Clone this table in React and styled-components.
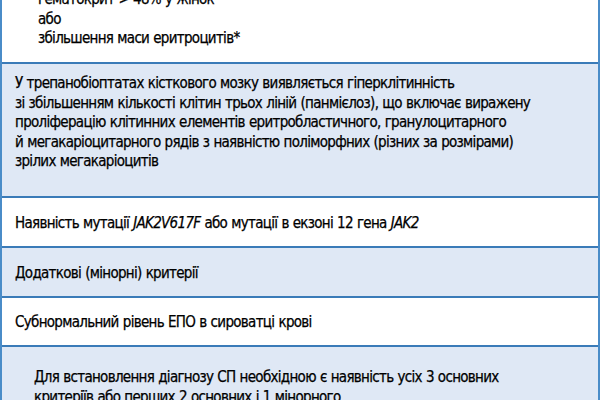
import React from 'react'
import styled, { createGlobalStyle } from 'styled-components'

const Global = createGlobalStyle`
  html, body { margin: 0; padding: 0; background: #fff; overflow: hidden; }
  body { font-family: "DejaVu Sans Condensed", "Noto Sans", sans-serif; }
`

const Table = styled.div`
  width: 600px;
  margin-top: -10px;
  box-sizing: border-box;
  border-left: 2px solid #4a8cc8;
  border-right: 2px solid #4a8cc8;
`

const Row = styled.div`
  box-sizing: border-box;
  height: ${p => p.h}px;
  padding: ${p => p.pad || '3px 0 0 13px'};
  background: ${p => (p.blue ? '#dfe8f5' : '#ffffff')};
  border-top: ${p => (p.first ? 'none' : '2px solid #3a7bb8')};
  display: flex;
  flex-direction: column;
  justify-content: ${p => p.align || 'center'};
`

const Line = styled.div`
  font-size: 15px;
  line-height: 19.5px;
  letter-spacing: -0.7px;
  word-spacing: 0.5px;
  color: #000;
  -webkit-text-stroke: 0.25px #000;
  white-space: nowrap;
`

const Gene = styled.i`
  font-style: italic;
`

export default function App() {
  return (
    <>
      <Global />
      <Table>
        <Row first h={72} pad="0 0 0 36px" align="flex-start">
          <Line>гематокрит &gt; 48% у жінок</Line>
          <Line>або</Line>
          <Line>збільшення маси еритроцитів*</Line>
        </Row>
        <Row blue h={134} pad="10px 0 0 13px" align="flex-start">
          <Line>У трепанобіоптатах кісткового мозку виявляється гіперклітинність</Line>
          <Line>зі збільшенням кількості клітин трьох ліній (панмієлоз), що включає виражену</Line>
          <Line>проліферацію клітинних елементів еритробластичного, гранулоцитарного</Line>
          <Line>й мегакаріоцитарного рядів з наявністю поліморфних (різних за розмірами)</Line>
          <Line>зрілих мегакаріоцитів</Line>
        </Row>
        <Row h={50}>
          <Line>
            Наявність мутації <Gene>JAK2V617F</Gene> або мутації в екзоні 12 гена <Gene>JAK2</Gene>
          </Line>
        </Row>
        <Row blue h={50}>
          <Line>Додаткові (мінорні) критерії</Line>
        </Row>
        <Row h={49}>
          <Line>Субнормальний рівень ЕПО в сироватці крові</Line>
        </Row>
        <Row blue h={80} pad="21px 0 0 32px" align="flex-start">
          <Line>Для встановлення діагнозу СП необхідною є наявність усіх 3 основних</Line>
          <Line>критеріїв або перших 2 основних і 1 мінорного</Line>
        </Row>
      </Table>
    </>
  )
}
